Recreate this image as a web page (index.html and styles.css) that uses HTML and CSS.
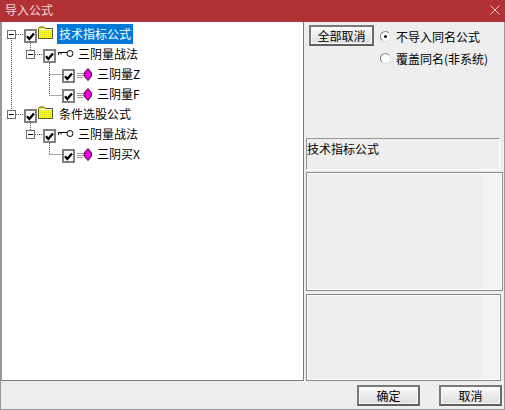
FILE: index.html
```html
<!DOCTYPE html>
<html lang="zh">
<head>
<meta charset="utf-8">
<title>导入公式</title>
<link rel="stylesheet" href="styles.css">
</head>
<body>
<svg width="0" height="0" class="defs">
  <defs>
    <pattern id="dither" width="2" height="2" patternUnits="userSpaceOnUse">
      <rect width="2" height="2" fill="#ffff00"/>
      <rect width="1" height="1" fill="#d8d820"/>
    </pattern>
  </defs>
  <symbol id="check" viewBox="0 0 9 9"><path d="M1 4.200 L3.300 7 L8 1.400" fill="none" stroke="#000" stroke-width="2.300"/></symbol>
  <symbol id="folder" viewBox="0 0 16 14"><path d="M0.500 12.500V2.500L2 1H6L7.500 2.500H14.500V12.500Z" fill="url(#dither)" stroke="#55552a"/><path d="M1.500 3.500H13.500" stroke="#fff"/></symbol>
  <symbol id="key" viewBox="0 0 16 8"><path d="M0.500 2.500H9M0.500 2.500V5M3 2.500V4.500" fill="none" stroke="#000"/><circle cx="12" cy="3.500" r="3" fill="#fff" stroke="#000"/></symbol>
  <symbol id="gem" viewBox="0 0 15 13"><path d="M0 5.500H6M0 7.500H6M0 9.500H6" stroke="#999"/><path d="M11 0.500L14.500 5V8L11 12.500L7 8V5Z" fill="#e800d8" stroke="#400040"/></symbol>
</svg>
<div class="window">
  <header class="titlebar">
    <span class="title">导入公式</span>
    <svg class="close" width="10" height="10" viewBox="0 0 10 10"><path d="M0.500 0.500L9.500 9.500M9.500 0.500L0.500 9.500" stroke="#eec9ca"/></svg>
  </header>
  <main class="content">
    <section class="tree">
      <svg class="lines" width="80" height="170" viewBox="0 22 80 170">
        <path d="M11.500 38V111M16 34.500H24M30.500 43V50M35 54.500H43M49.500 63V95M49.500 74.500H62M49.500 95.500H62M16 114.500H24M30.500 123V130M35 134.500H43M49.500 143V155M49.500 154.500H62" stroke="#555" stroke-dasharray="1 1" fill="none"/>
      </svg>
      <div class="row l0"><span class="exp"></span><span class="cb"><svg><use href="#check"/></svg></span><svg class="ic folder"><use href="#folder"/></svg><span class="label selected">技术指标公式</span></div>
      <div class="row l1"><span class="exp"></span><span class="cb"><svg><use href="#check"/></svg></span><svg class="ic key"><use href="#key"/></svg><span class="label">三阴量战法</span></div>
      <div class="row l2"><span class="cb"><svg><use href="#check"/></svg></span><svg class="ic gem"><use href="#gem"/></svg><span class="label">三阴量Z</span></div>
      <div class="row l2"><span class="cb"><svg><use href="#check"/></svg></span><svg class="ic gem"><use href="#gem"/></svg><span class="label">三阴量F</span></div>
      <div class="row l0"><span class="exp"></span><span class="cb"><svg><use href="#check"/></svg></span><svg class="ic folder"><use href="#folder"/></svg><span class="label">条件选股公式</span></div>
      <div class="row l1"><span class="exp"></span><span class="cb"><svg><use href="#check"/></svg></span><svg class="ic key"><use href="#key"/></svg><span class="label">三阴量战法</span></div>
      <div class="row l2"><span class="cb"><svg><use href="#check"/></svg></span><svg class="ic gem"><use href="#gem"/></svg><span class="label">三阴买X</span></div>
    </section>
    <aside class="side">
      <div class="controls">
        <button class="btn cancel-all">全部取消</button>
        <div class="radios">
          <div class="radio-row"><span class="radio on"></span>不导入同名公式</div>
          <div class="radio-row"><span class="radio"></span>覆盖同名(非系统)</div>
        </div>
      </div>
      <div class="name-box">技术指标公式</div>
      <div class="panel mid"><span class="stripe"></span></div>
      <div class="panel low"><span class="stripe"></span></div>
    </aside>
  </main>
  <footer class="footer">
    <button class="btn action">确定</button>
    <button class="btn action">取消</button>
  </footer>
</div>
</body>
</html>
```
FILE: styles.css
```css
* { box-sizing: border-box; }
html, body { margin: 0; padding: 0; }
body { width: 505px; height: 410px; overflow: hidden; background: #eeeeee; font-family: "Noto Sans CJK SC", "Liberation Sans", sans-serif; font-size: 12px; color: #000; }
.defs { position: absolute; }
.window { width: 505px; height: 410px; display: flex; flex-direction: column; background: #eee; border-bottom: 1px solid #999; }
.titlebar { height: 22px; flex: none; background: #b13135; color: #f1d9da; display: flex; align-items: center; justify-content: space-between; padding: 0 5px 2px 5px; font-size: 12px; }
.title { line-height: 18px; }
.content { height: 359px; flex: none; display: flex; border-left: 1px solid #999; border-right: 1px solid #999; }
.tree { position: relative; width: 303px; height: 359px; background: #fff; border: 1px solid #7a7a7a; border-top: 0; border-left-color: #999; padding-top: 2px; }
.lines { position: absolute; left: -2px; top: 0; }
.row { height: 20px; display: flex; align-items: center; position: relative; }
.l0 { padding-left: 5px; }
.l1 { padding-left: 24px; }
.l2 { padding-left: 60px; }
.exp { width: 9px; height: 9px; border: 1px solid #707070; background: linear-gradient(#000, #000) center / 5px 1px no-repeat #fff; margin-right: 8px; flex: none; }
.cb { width: 13px; height: 14px; margin-top: 4px; border: 2px solid #808080; background: #fff; flex: none; display: flex; align-items: center; justify-content: center; }
.cb svg { width: 9px; height: 9px; }
.ic { flex: none; display: block; }
.folder { width: 16px; height: 14px; margin: -2px 0 0 1px; }
.key { width: 16px; height: 8px; margin: 0 0 0 2px; }
.gem { width: 15px; height: 13px; margin-left: 2px; }
.label { line-height: 20px; white-space: nowrap; padding: 0 1px; margin-left: 4px; }
.l0 .label { margin-left: 3px; padding: 0 2px; }
.l1 .label { margin-left: 3px; }
.selected { background: #0078d7; color: #fff; }
.side { flex: 1; min-width: 0; display: flex; flex-direction: column; padding-left: 2px; }
.controls { height: 116px; flex: none; display: flex; padding: 3px 0 0 3px; gap: 6px; }
.btn { font: inherit; color: #000; padding: 0; background: linear-gradient(#fff, #ebebeb 45%, #dedede); border: 2px solid #6e6e6e; border-color: #7a7a7a #6a6a6a #5f5f5f #7a7a7a; box-shadow: inset 0 0 0 1px #f8f8f8; }
.cancel-all { width: 65px; height: 21px; flex: none; }
.radios { display: flex; flex-direction: column; }
.radio-row { display: flex; align-items: center; gap: 5px; height: 22px; white-space: nowrap; }
.radio { width: 11px; height: 11px; border-radius: 50%; background: #fff; border: 1px solid #808080; border-right-color: #ddd; border-bottom-color: #ddd; position: relative; flex: none; }
.on::after { content: ""; position: absolute; left: 3px; top: 3px; width: 3px; height: 3px; border-radius: 50%; background: #000; }
.name-box { width: 194px; height: 32px; flex: none; border: 1px solid #fff; border-top: 1px solid #959595; border-left: 1px solid #959595; line-height: 18px; padding-top: 1px; background: #eee; }
.panel { position: relative; border: 1px solid #8a8a8a; background: #eee; box-shadow: inset 0 0 0 1px #fff; flex: none; }
.stripe { position: absolute; top: 1px; bottom: 1px; right: 1px; width: 18px; background: #f4f3f1; }
.mid { width: 197px; height: 119px; margin-top: 2px; }
.low { width: 195px; height: 87px; margin-top: 3px; }
.footer { flex: 1; display: flex; justify-content: flex-end; gap: 19px; padding: 4px 2px 0 0; border-left: 1px solid #999; border-right: 1px solid #999; }
.action { width: 63px; height: 21px; }
```
